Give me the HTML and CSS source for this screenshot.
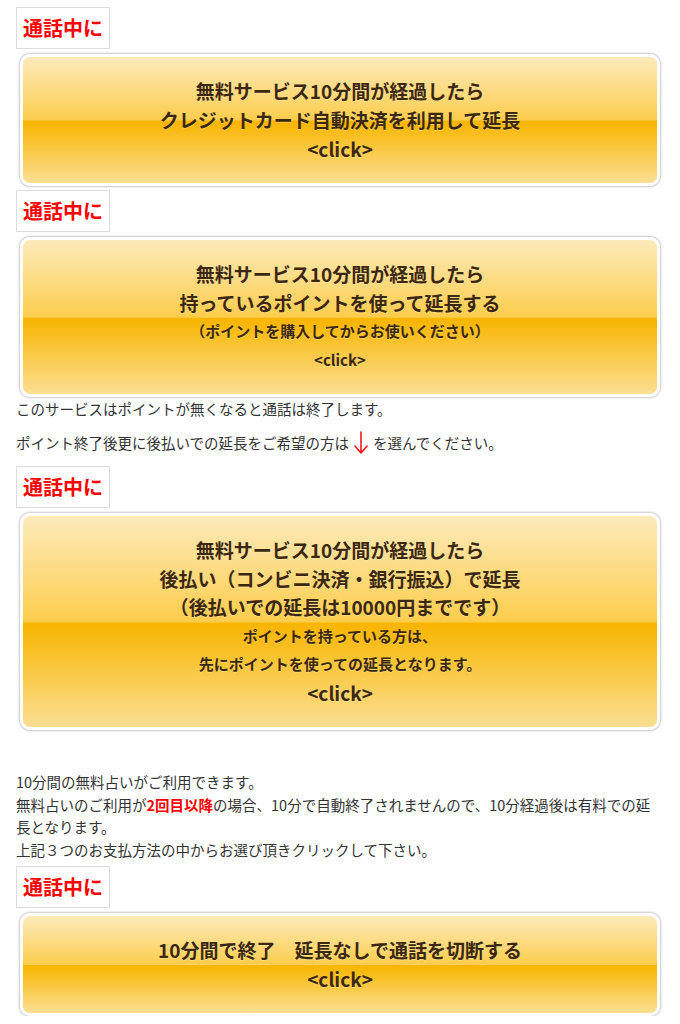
FILE: index.html
```html
<!DOCTYPE html>
<html lang="ja">
<head>
<meta charset="utf-8">
<title>通話中に</title>
<link rel="stylesheet" href="styles.css">
</head>
<body>
<div class="page">
  <div class="label">通話中に</div>
  <a class="btn btn-1" href="#">
    <span class="line big">無料サービス10分間が経過したら</span>
    <span class="line big">クレジットカード自動決済を利用して延長</span>
    <span class="line big">&lt;click&gt;</span>
  </a>

  <div class="label label-next">通話中に</div>
  <a class="btn btn-2" href="#">
    <span class="line big">無料サービス10分間が経過したら</span>
    <span class="line big">持っているポイントを使って延長する</span>
    <span class="line small">（ポイントを購入してからお使いください）</span>
    <span class="line small">&lt;click&gt;</span>
  </a>
  <p class="note note-1">このサービスはポイントが無くなると通話は終了します。</p>
  <p class="note note-2">ポイント終了後更に後払いでの延長をご希望の方は<svg class="arrow" viewBox="0 0 14 24" width="14" height="24" aria-hidden="true"><path d="M7 1 V22 M1 15 L7 22 L13 15" fill="none" stroke="#f01818" stroke-width="1.6" stroke-linecap="round" stroke-linejoin="round"/></svg>を選んでください。</p>

  <div class="label label-after-note">通話中に</div>
  <a class="btn btn-3" href="#">
    <span class="line big">無料サービス10分間が経過したら</span>
    <span class="line big">後払い（コンビニ決済・銀行振込）で延長</span>
    <span class="line big">（後払いでの延長は10000円までです）</span>
    <span class="line small">ポイントを持っている方は、</span>
    <span class="line small">先にポイントを使っての延長となります。</span>
    <span class="line big">&lt;click&gt;</span>
  </a>

  <div class="info">
    <p>10分間の無料占いがご利用できます。</p>
    <p>無料占いのご利用が<strong class="red">2回目以降</strong>の場合、10分で自動終了されませんので、10分経過後は有料での延長となります。</p>
    <p>上記３つのお支払方法の中からお選び頂きクリックして下さい。</p>
  </div>

  <div class="label label-after-info">通話中に</div>
  <a class="btn btn-4" href="#">
    <span class="line big">10分間で終了　延長なしで通話を切断する</span>
    <span class="line big">&lt;click&gt;</span>
  </a>
</div>
</body>
</html>
```

FILE: styles.css
```css
html, body {
  margin: 0;
  padding: 0;
  background: #ffffff;
}

body {
  font-family: "Noto Sans CJK JP", "Noto Sans", sans-serif;
  color: #333333;
}

.page {
  padding: 7px 14px 0 16px;
  display: flex;
  flex-direction: column;
  align-items: flex-start;
}

.label {
  border: 1px solid #dddddd;
  padding: 7px 6px 7px 6px;
  font-size: 20px;
  line-height: 26px;
  font-weight: bold;
  color: #ff0000;
}

.label-next {
  margin-top: 4px;
}

.label-after-note {
  margin-top: 10px;
}

.label-after-info {
  margin-top: 5px;
}

.btn {
  align-self: stretch;
  display: flex;
  flex-direction: column;
  align-items: center;
  margin: 5px 6px 0 4px;
  padding: 20px 0;
  border: 3px solid #ffffff;
  border-radius: 10px;
  box-shadow: 0 0 2px 1px #c8c8c8;
  background: linear-gradient(to bottom, #fceabb 0%, #fccd4d 50%, #f8b500 51%, #fbdf93 100%);
  color: #3c2810;
  text-decoration: none;
  font-weight: bold;
  text-shadow: 0 1px 0 rgba(255, 240, 200, 0.35);
}

.line {
  display: block;
  line-height: 28.5px;
  white-space: nowrap;
}

.btn-1 .line {
  line-height: 28.8px;
}

.big {
  font-size: 19px;
}

.small {
  font-size: 15px;
}

.note {
  margin: 0;
  font-size: 14.5px;
}

.note-1 {
  margin-top: 1px;
  line-height: 22px;
}

.note-2 {
  margin-top: 10px;
  line-height: 26px;
  display: flex;
  align-items: center;
}

.arrow {
  display: block;
  margin: 0 5px;
}

.info {
  margin-top: 41px;
  font-size: 14.5px;
  line-height: 22.4px;
  width: 100%;
  padding-right: 2px;
  box-sizing: border-box;
}

.info p {
  margin: 0;
}

.red {
  color: #ff0000;
  font-weight: bold;
}
```
